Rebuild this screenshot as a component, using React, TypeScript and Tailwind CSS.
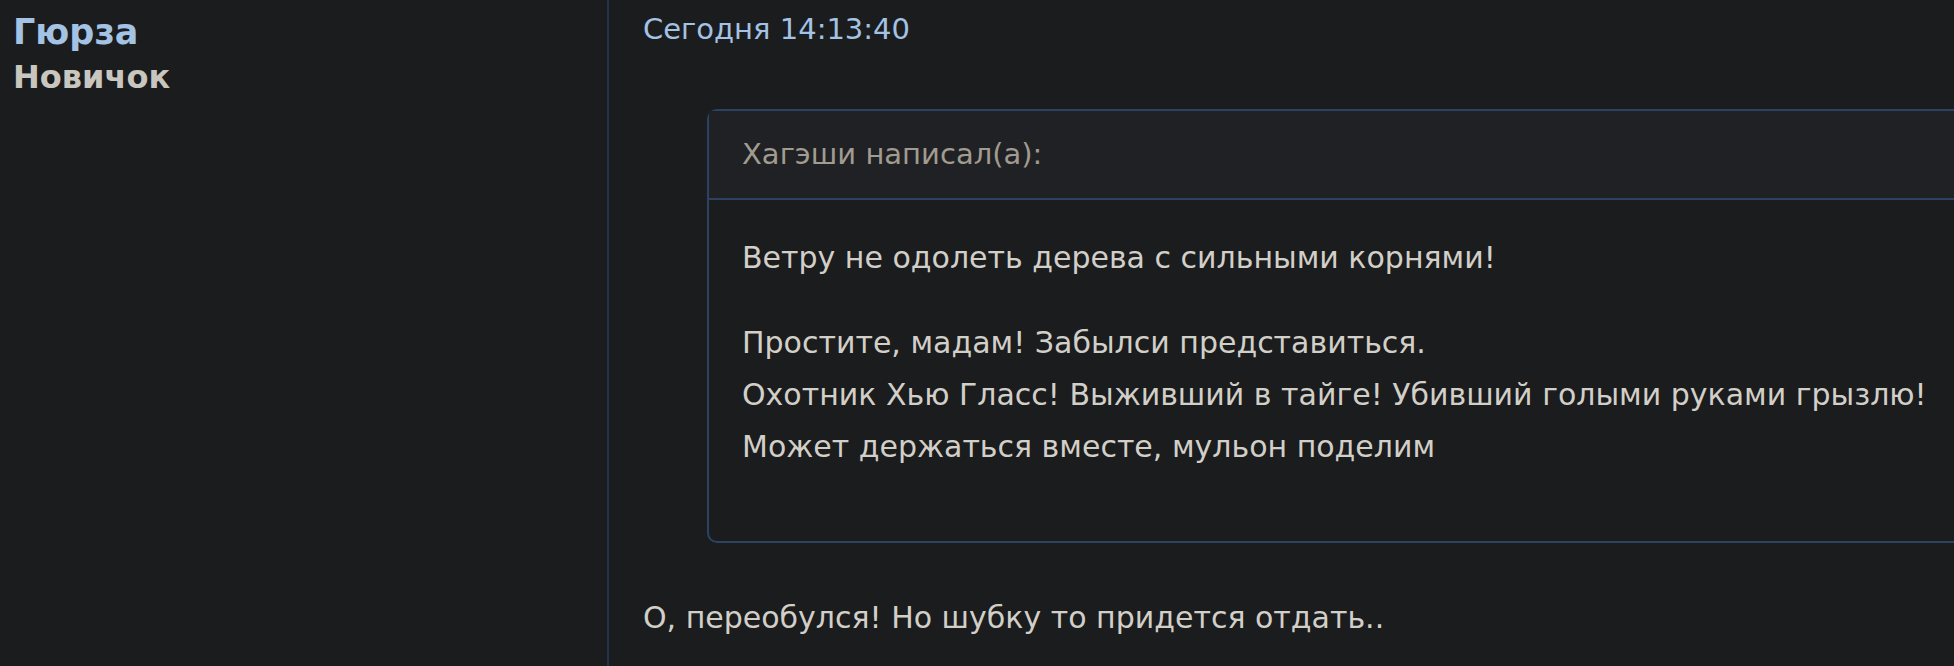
const font = { fontFamily: '"DejaVu Sans", "Liberation Sans", sans-serif' }

function Sidebar() {
  return (
    <aside className="w-[609px] shrink-0 border-r-2 border-[#22324a] pl-[13px] pt-[10px]">
      <div className="text-[35px] font-bold leading-[44px] text-[#a4c2e3]">Гюрза</div>
      <div className="text-[32px] font-bold leading-[46px] text-[#c9c6bf]">Новичок</div>
    </aside>
  )
}

function Quote() {
  return (
    <div className="w-[1400px] rounded-[10px] border-2 border-[#2b4263] bg-[#1b1c1e]">
      <div className="flex h-[89px] items-center border-b-2 border-[#2b4263] bg-[#202124] px-[33px] text-[29px] text-[#a19b90]">
        Хагэши написал(а):
      </div>
      <div className="px-[33px] pt-[32px] pb-[68px] text-[30px] leading-[52px] text-[#d2cfc8]">
        <p>Ветру не одолеть дерева с сильными корнями!</p>
        <p className="mt-[33px]">
          Простите, мадам! Забылси представиться.
          <br />
          Охотник Хью Гласс! Выживший в тайге! Убивший голыми руками грызлю!
          <br />
          Может держаться вместе, мульон поделим
        </p>
      </div>
    </div>
  )
}

export default function App() {
  return (
    <div className="flex h-[666px] w-full overflow-hidden bg-[#1b1c1e]" style={font}>
      <Sidebar />
      <main className="min-w-0 flex-1 pl-[34px] pt-[6px]">
        <div className="text-[29px] leading-[46px] text-[#a4c2e3]">Сегодня 14:13:40</div>
        <div className="ml-[64px] mt-[57px]">
          <Quote />
        </div>
        <p className="mt-[49px] text-[30px] leading-[52px] text-[#d2cfc8]">О, переобулся! Но шубку то придется отдать..</p>
      </main>
    </div>
  )
}
